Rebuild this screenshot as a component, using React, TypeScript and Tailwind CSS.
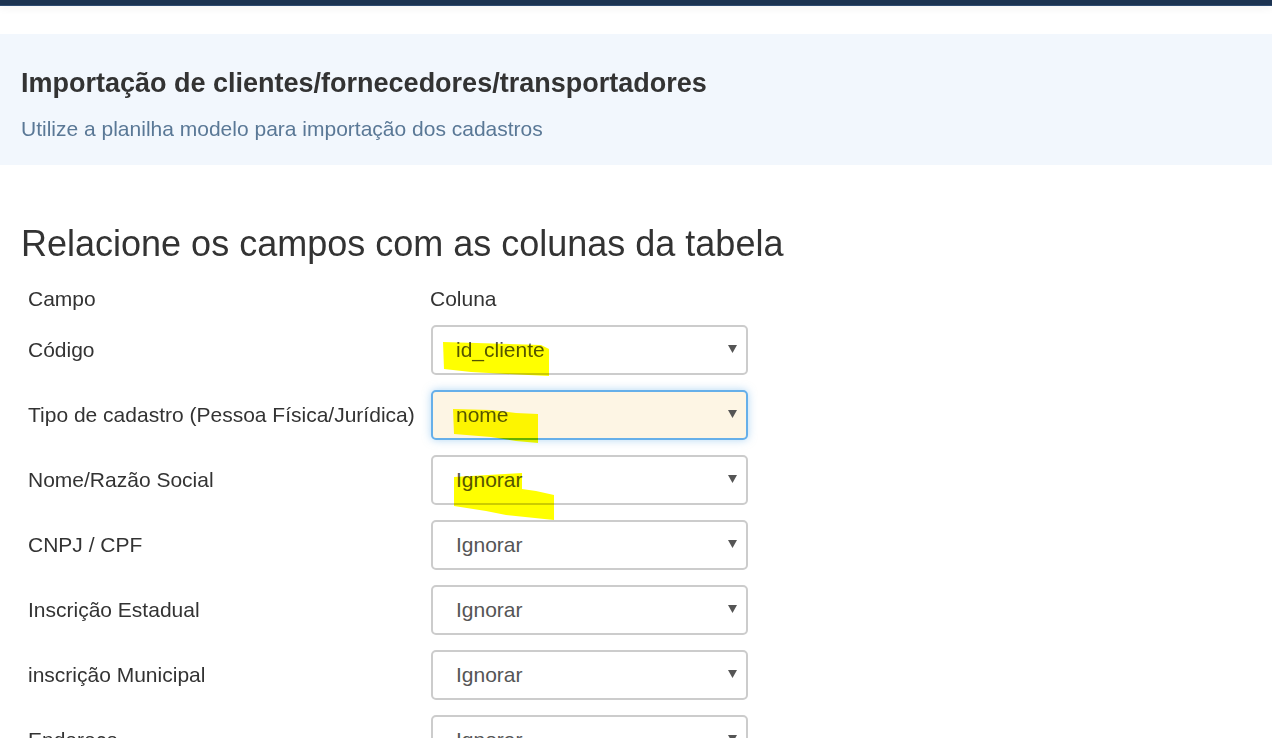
import React from 'react';

type Row = { label: string; value: string; focused?: boolean; mark?: 1 | 2 | 3 };

const rows: Row[] = [
  { label: 'Código', value: 'id_cliente', mark: 1 },
  { label: 'Tipo de cadastro (Pessoa Física/Jurídica)', value: 'nome', focused: true, mark: 2 },
  { label: 'Nome/Razão Social', value: 'Ignorar', mark: 3 },
  { label: 'CNPJ / CPF', value: 'Ignorar' },
  { label: 'Inscrição Estadual', value: 'Ignorar' },
  { label: 'inscrição Municipal', value: 'Ignorar' },
  { label: 'Endereço', value: 'Ignorar' },
  { label: 'Número', value: 'Ignorar' },
  { label: 'Bairro', value: 'Ignorar' },
];

// yellow highlighter swipes, coordinates relative to the select box
function Marker({ kind }: { kind: 1 | 2 | 3 }) {
  if (kind === 1) {
    return (
      <svg className="pointer-events-none absolute -left-[2px] -top-[2px] mix-blend-multiply" width="317" height="60">
        <path d="M12 17 L110 20 L118 24 L118 51 L75 49 L40 47 L13 44 Z" fill="#ffff00" />
      </svg>
    );
  }
  if (kind === 2) {
    return (
      <svg className="pointer-events-none absolute -left-[2px] -top-[2px] mix-blend-multiply" width="317" height="60">
        <path d="M22 19 L60 20 L85 23 L107 24 L107 53 L85 51 L60 47 L23 44 Z" fill="#ffff00" />
      </svg>
    );
  }
  return (
    <svg className="pointer-events-none absolute -left-[2px] -top-[2px] mix-blend-multiply" width="317" height="70">
      <path d="M23 22 L91 18 L91 34 L105 36 L123 40 L123 65 L75 60 L55 56 L23 51 Z" fill="#ffff00" />
    </svg>
  );
}

function FakeSelect({ value, focused, mark }: { value: string; focused?: boolean; mark?: 1 | 2 | 3 }) {
  return (
    <div
      className={
        focused
          ? 'relative flex h-[50px] w-[317px] items-center rounded-[5px] border-2 border-[#66afe9] bg-[#fdf5e4] pl-[23px] pr-[9px] shadow-[0_0_8px_rgba(102,175,233,0.5)]'
          : 'relative flex h-[50px] w-[317px] items-center rounded-[5px] border-2 border-[#cccccc] bg-white pl-[23px] pr-[9px]'
      }
    >
      <span className="flex-1 text-[21px] text-[#555]">{value}</span>
      <svg width="9" height="9" viewBox="0 0 9 9" className="mb-[2px]">
        <path d="M0 1 L9 1 L4.5 9 Z" fill="#555" />
      </svg>
      {mark && <Marker kind={mark} />}
    </div>
  );
}

export default function App() {
  return (
    <div className="min-h-screen bg-white text-[#333] font-['Liberation_Sans',Arial,sans-serif]">
      {/* top bar */}
      <div className="h-[6px] border-b border-[#2e4b70] bg-[#1c3351] shadow-[0_2px_8px_rgba(0,0,0,0.06)]" />

      <div className="mt-[28px] h-[131px] bg-[#f2f7fd] px-[21px] pt-[34px]">
        <h1 className="text-[27px] font-bold leading-[31px] text-[#333]">
          Importação de clientes/fornecedores/transportadores
        </h1>
        <p className="mt-[18px] text-[21px] leading-[24px] text-[#5a7896]">
          Utilize a planilha modelo para importação dos cadastros
        </p>
      </div>

      <div className="px-[21px]">
        <h2 className="mt-[60px] text-[36px] leading-[38px] font-normal text-[#333]">
          Relacione os campos com as colunas da tabela
        </h2>

        <div className="mt-[17px]">
          <div className="flex h-[37px] items-center text-[21px]">
            <div className="w-[409px] pl-[7px]">Campo</div>
            <div>Coluna</div>
          </div>
          {rows.map((r) => (
            <div key={r.label} className="flex h-[65px] items-center text-[21px]">
              <div className="w-[410px] pl-[7px]">{r.label}</div>
              <FakeSelect value={r.value} focused={r.focused} mark={r.mark} />
            </div>
          ))}
        </div>
      </div>
    </div>
  );
}
